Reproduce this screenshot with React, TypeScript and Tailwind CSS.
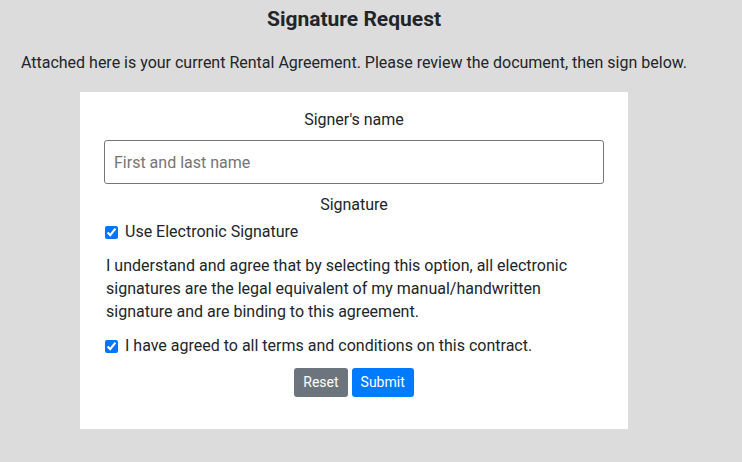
export default function App() {
  return (
    <div className="min-h-[462px] w-full bg-[#dcdcdc] font-['Roboto',sans-serif] text-[#212529]">
      <div className="flex w-[708px] flex-col items-center">
        <h1 className="pt-[7px] text-[21px] font-bold leading-[24px]">Signature Request</h1>
        <p className="mt-[20px] text-[16px] leading-[24px]">
          Attached here is your current Rental Agreement. Please review the document, then sign below.
        </p>
        <div className="mt-[17px] w-[548px] bg-white px-6 pt-[16px] pb-[32px]">
          <div className="text-center text-[16px] leading-[24px]">Signer's name</div>
          <input
            type="text"
            placeholder="First and last name"
            className="mt-[8px] h-[44px] w-full rounded-[3px] border border-[#767676] px-[9px] text-[16px] placeholder:text-[#757575]"
          />
          <div className="mt-[9px] text-center text-[16px] leading-[24px]">Signature</div>
          <label className="mt-[3px] flex items-center gap-[7px] pl-px text-[16px] leading-[24px]">
            <input type="checkbox" defaultChecked className="h-[13px] w-[13px] accent-[#0075ff]" />
            Use Electronic Signature
          </label>
          <p className="mt-[10px] pl-[2px] text-[16px] leading-[23px]">
            I understand and agree that by selecting this option, all electronic signatures are the legal equivalent of my manual/handwritten signature and are binding to this agreement.
          </p>
          <label className="mt-[11px] flex items-center gap-[7px] pl-px text-[16px] leading-[24px]">
            <input type="checkbox" defaultChecked className="h-[13px] w-[13px] accent-[#0075ff]" />
            I have agreed to all terms and conditions on this contract.
          </label>
          <div className="mt-[10px] flex justify-center gap-1">
            <button className="h-[29px] rounded-[3px] bg-[#6c757d] px-[9px] text-[14px] text-white">Reset</button>
            <button className="h-[29px] rounded-[3px] bg-[#007bff] px-[9px] text-[14px] text-white">Submit</button>
          </div>
        </div>
      </div>
    </div>
  );
}
